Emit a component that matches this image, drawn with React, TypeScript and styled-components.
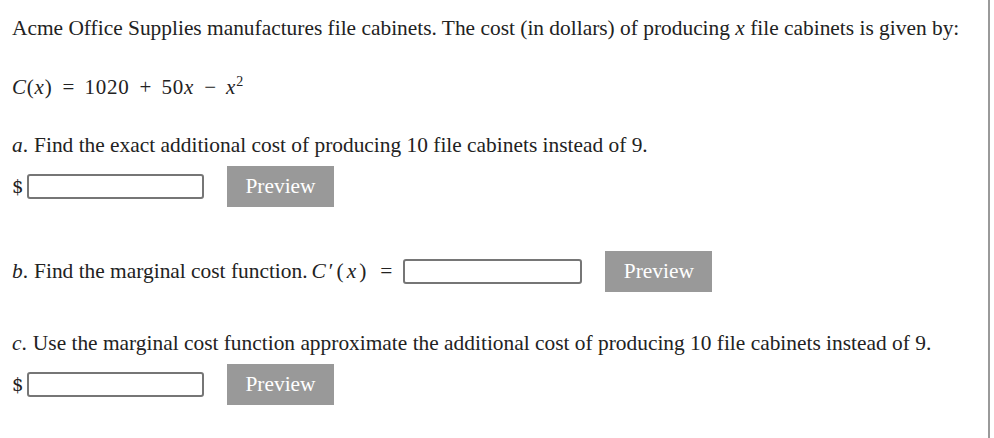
import { createGlobalStyle, styled } from 'styled-components';

const GlobalStyle = createGlobalStyle`
  html, body {
    margin: 0;
    padding: 0;
    background: #ffffff;
  }
  body {
    font-family: "Liberation Serif", "Times New Roman", serif;
    color: #222222;
  }
`;

const Frame = styled.div`
  box-sizing: border-box;
  width: 990px;
  height: 438px;
  border-right: 2px solid #9a9a9a;
  padding: 16px 0 0 12px;
  overflow: hidden;
`;

const Para = styled.div<{ $top: number }>`
  margin-top: ${(p) => p.$top}px;
  font-size: 21.4px;
  line-height: 24px;
  white-space: nowrap;
`;

const Row = styled.div<{ $top: number }>`
  display: flex;
  align-items: center;
  margin-top: ${(p) => p.$top}px;
  font-size: 21.4px;
  white-space: nowrap;
`;

const MathVar = styled.span`
  font-style: italic;
  font-family: "Liberation Serif", "Times New Roman", serif;
`;

const MathExpr = styled.span`
  margin-left: 4px;
  letter-spacing: 3px;
`;

const Formula = styled.span`
  font-size: 21px;
  letter-spacing: 0.8px;
`;

const Op = styled.span<{ $gap?: number }>`
  margin: 0 ${(p) => p.$gap ?? 8}px;
  letter-spacing: 0;
`;

const Sup = styled.sup`
  font-size: 14px;
`;

const Label = styled.span`
  margin-right: 6px;
`;

const Dollar = styled.span`
  width: 15px;
  font-family: "DejaVu Serif", serif;
  font-size: 18px;
`;

const AnswerBox = styled.input<{ $width: number }>`
  box-sizing: border-box;
  width: ${(p) => p.$width}px;
  height: 25px;
  border: 2px solid #767676;
  border-radius: 3px;
  background: #ffffff;
  padding: 0 4px;
  outline: none;
`;

const PreviewButton = styled.button<{ $left: number }>`
  margin-left: ${(p) => p.$left}px;
  width: 107px;
  height: 41px;
  border: none;
  background: #999999;
  color: #ffffff;
  font-family: "Liberation Serif", "Times New Roman", serif;
  font-size: 21.4px;
  padding: 0;
`;

export default function App() {
  return (
    <>
      <GlobalStyle />
      <Frame>
        <Para $top={0}>
          Acme Office Supplies manufactures file cabinets. The cost (in dollars) of producing{' '}
          <MathVar>x</MathVar> file cabinets is given by:
        </Para>
        <Para $top={30}>
          <Formula>
            <MathVar>C</MathVar>(<MathVar>x</MathVar>)<Op $gap={10}>=</Op>1020<Op $gap={10}>+</Op>50
            <MathVar>x</MathVar>
            <Op $gap={10}>−</Op>
            <MathVar>x</MathVar>
            <Sup>2</Sup>
          </Formula>
        </Para>
        <Para $top={34}>
          <Label>
            <MathVar>a</MathVar>.
          </Label>
          Find the exact additional cost of producing 10 file cabinets instead of 9.
        </Para>
        <Row $top={9}>
          <Dollar>$</Dollar>
          <AnswerBox $width={177} />
          <PreviewButton $left={23}>Preview</PreviewButton>
        </Row>
        <Row $top={44}>
          <Label>
            <MathVar>b</MathVar>.
          </Label>
          Find the marginal cost function.
          <MathExpr>
            <MathVar>C</MathVar>′(<MathVar>x</MathVar>)
          </MathExpr>
          <Op $gap={11}>=</Op>
          <AnswerBox $width={179} />
          <PreviewButton $left={23}>Preview</PreviewButton>
        </Row>
        <Para $top={39}>
          <Label>
            <MathVar>c</MathVar>.
          </Label>
          Use the marginal cost function approximate the additional cost of producing 10 file cabinets instead of 9.
        </Para>
        <Row $top={9}>
          <Dollar>$</Dollar>
          <AnswerBox $width={177} />
          <PreviewButton $left={23}>Preview</PreviewButton>
        </Row>
      </Frame>
    </>
  );
}
